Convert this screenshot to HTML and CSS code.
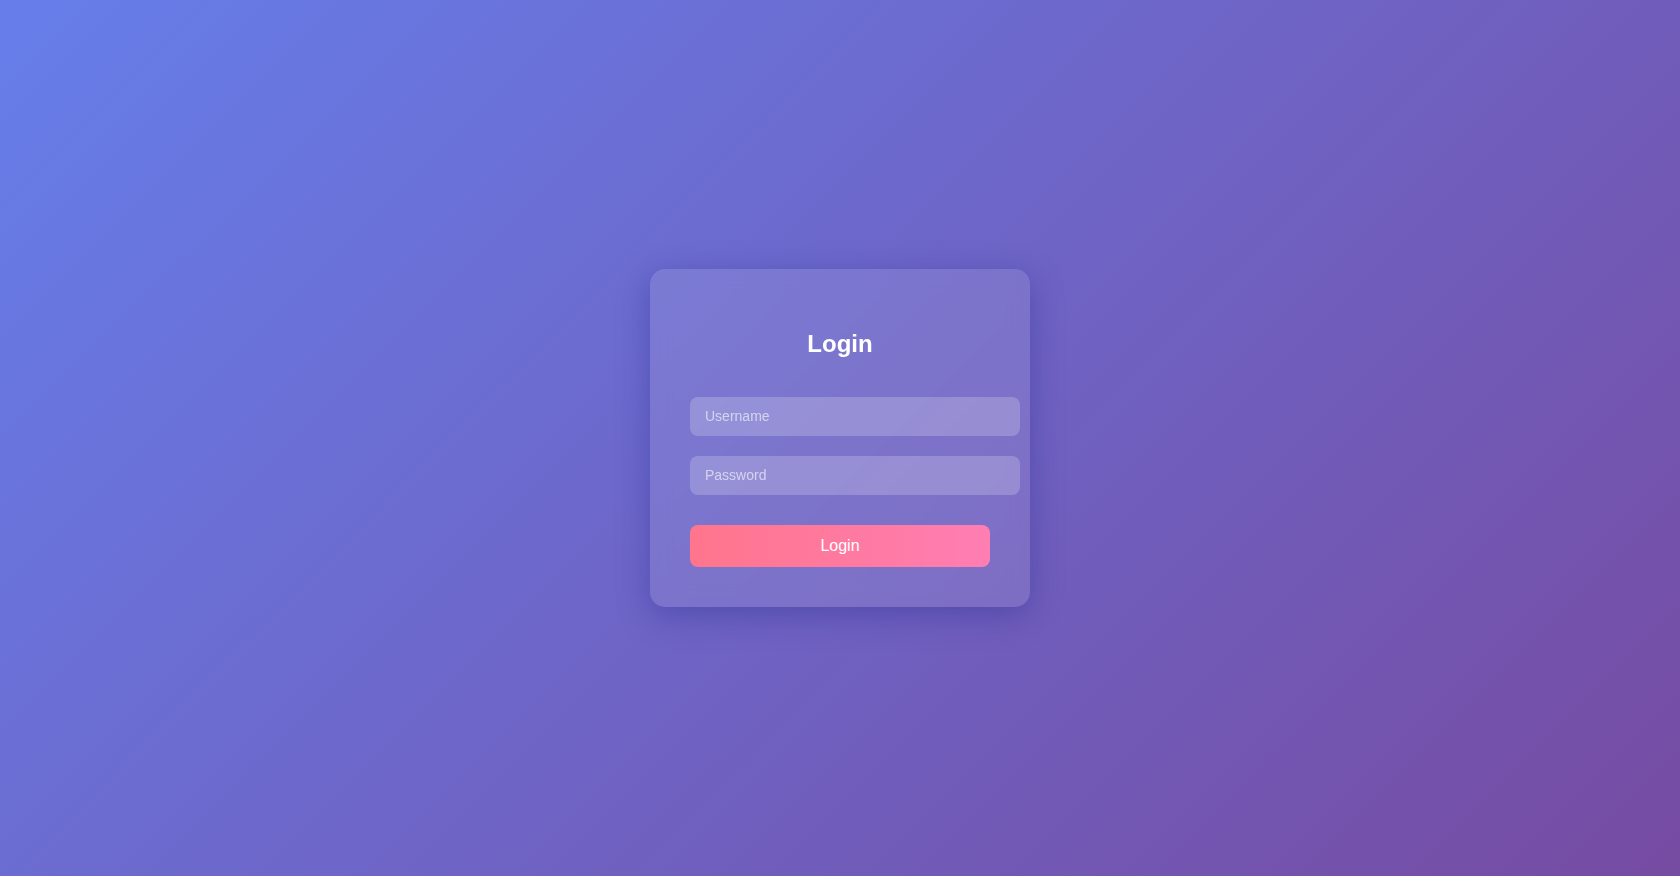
FILE: index.html
```html
<!DOCTYPE html>
<html>
<head>
    <title>Login</title>
    <meta name="viewport" content="width=device-width, initial-scale=1.0">
    <link rel="stylesheet" href="styles.css">
</head>
<body>

<div class="login-box">
    <h2>Login</h2>
    <form>
        <div class="input-group">
            <input type="text" placeholder="Username">
        </div>
        <div class="input-group">
            <input type="password" placeholder="Password">
        </div>
        <button type="button">Login</button>
    </form>
</div>

</body>
</html>
```

FILE: styles.css
```css
body {
    margin: 0;
    height: 100vh;
    display: flex;
    justify-content: center;
    align-items: center;
    font-family: "Liberation Sans", Arial, sans-serif;
    background: linear-gradient(135deg, #667eea 0%, #764ba2 100%);
}
.login-box {
    width: 300px;
    padding: 40px;
    background: rgba(255, 255, 255, 0.1);
    border-radius: 15px;
    box-shadow: 0 8px 32px rgba(31, 38, 135, 0.37);
    backdrop-filter: blur(10px);
    text-align: center;
}
h2 {
    color: #fff;
    font-size: 24px;
    margin: 21px 0 39px;
}
.input-group {
    margin-bottom: 20px;
}
input {
    display: block;
    width: 100%;
    padding: 12px 15px;
    line-height: 15px;
    border: none;
    border-radius: 8px;
    background: rgba(255, 255, 255, 0.2);
    color: #fff;
    font-size: 14px;
    font-family: inherit;
    outline: none;
}
input::placeholder {
    color: rgba(255, 255, 255, 0.6);
}
button {
    width: 100%;
    height: 42px;
    margin-top: 10px;
    border: none;
    border-radius: 8px;
    background: linear-gradient(90deg, #ff758c 0%, #ff7eb3 100%);
    color: #fff;
    font-size: 16px;
    font-family: inherit;
    cursor: pointer;
}
```
